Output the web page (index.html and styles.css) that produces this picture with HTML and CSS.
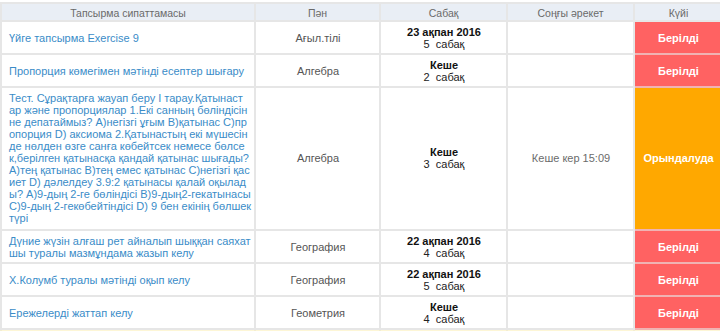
FILE: index.html
```html
<!DOCTYPE html>
<html>
<head>
<meta charset="utf-8">
<link rel="stylesheet" href="styles.css">
</head>
<body>
<div class="wrap">
<table class="tasks">
  <colgroup>
    <col class="c1"><col class="c2"><col class="c3"><col class="c4"><col class="c5">
  </colgroup>
  <thead>
    <tr>
      <th>Тапсырма сипаттамасы</th>
      <th>Пән</th>
      <th>Сабақ</th>
      <th>Соңғы әрекет</th>
      <th>Күйі</th>
    </tr>
  </thead>
  <tbody>
    <tr class="r1">
      <td class="desc"><a>Үйге тапсырма Exercise 9</a></td>
      <td class="subj">Ағыл.тілі</td>
      <td class="lesson"><b>23 ақпан 2016</b><br>5&nbsp; сабақ</td>
      <td class="last"></td>
      <td class="status given">Берілді</td>
    </tr>
    <tr class="r1">
      <td class="desc"><a>Пропорция көмегімен мәтінді есептер шығару</a></td>
      <td class="subj">Алгебра</td>
      <td class="lesson"><b>Кеше</b><br>2&nbsp; сабақ</td>
      <td class="last"></td>
      <td class="status given">Берілді</td>
    </tr>
    <tr class="r3">
      <td class="desc"><a>Тест. Сұрақтарға жауап беру І тарау.Қатынаст<br>ар және пропорциялар 1.Екі санның бөліндісін<br>не депатаймыз? А)негізгі ұғым В)қатынас С)пр<br>опорция D) аксиома 2.Қатынастың екі мүшесін<br>де нөлден өзге санға көбейтсек немесе бөлсе<br>к,берілген қатынасқа қандай қатынас шығады?<br>А)тең қатынас В)тең емес қатынас С)негізгі қас<br>иет D) дәлелдеу 3.9:2 қатынасы қалай оқылад<br>ы? А)9-дың 2-ге бөліндісі В)9-дың2-гекатынасы<br>С)9-дың 2-гекөбейтіндісі D) 9 бен екінің бөлшек<br>түрі</a></td>
      <td class="subj">Алгебра</td>
      <td class="lesson"><b>Кеше</b><br>3&nbsp; сабақ</td>
      <td class="last">Кеше кер 15:09</td>
      <td class="status progress">Орындалуда</td>
    </tr>
    <tr class="r1">
      <td class="desc"><a>Дүние жүзін алғаш рет айналып шыққан саяхат<br>шы туралы мазмұндама жазып келу</a></td>
      <td class="subj">География</td>
      <td class="lesson"><b>22 ақпан 2016</b><br>4&nbsp; сабақ</td>
      <td class="last"></td>
      <td class="status given">Берілді</td>
    </tr>
    <tr class="r1">
      <td class="desc"><a>Х.Колумб туралы мәтінді оқып келу</a></td>
      <td class="subj">География</td>
      <td class="lesson"><b>22 ақпан 2016</b><br>5&nbsp; сабақ</td>
      <td class="last"></td>
      <td class="status given">Берілді</td>
    </tr>
    <tr class="r1">
      <td class="desc"><a>Ережелерді жаттап келу</a></td>
      <td class="subj">Геометрия</td>
      <td class="lesson"><b>Кеше</b><br>4&nbsp; сабақ</td>
      <td class="last"></td>
      <td class="status given">Берілді</td>
    </tr>
    <tr class="next">
      <td></td><td></td><td></td><td></td><td></td>
    </tr>
  </tbody>
</table>
</div>
</body>
</html>
```
FILE: styles.css
```css
html, body {
  margin: 0;
  padding: 0;
  background: #ffffff;
  overflow: hidden;
}
.wrap {
  padding: 2px 0 0 0;
  width: 722px;
}
.tasks {
  border-collapse: collapse;
  table-layout: fixed;
  width: 722px;
  font-family: "Liberation Sans", Arial, sans-serif;
  font-size: 11px;
  color: #333;
}
.c1 { width: 254px; }
.c2 { width: 125px; }
.c3 { width: 127px; }
.c4 { width: 127px; }
.c5 { width: 89px; }
.tasks th, .tasks td {
  border: 2px solid #e6e6e6;
}
.tasks th {
  background: #e9eef5;
  color: #6a6a6a;
  font-weight: normal;
  font-size: 10.5px;
  height: 15px;
  padding: 1px 4px 0 4px;
  text-align: center;
  line-height: 14px;
}
.tasks td {
  padding: 3px 6px 3px 7px;
  line-height: 12px;
  vertical-align: middle;
}
.r1 td { height: 25px; }
.r3 td {
  padding-top: 4px;
  padding-bottom: 5px;
}
.tasks td.desc {
  padding-right: 1px;
}
.desc a {
  color: #3a8cc8;
  text-decoration: none;
  word-break: break-all;
}
.subj {
  text-align: center;
  color: #555;
}
.lesson {
  text-align: center;
  color: #222;
}
.lesson b { color: #111; }
.last {
  text-align: center;
  color: #6b6b6b;
}
.tasks td.status {
  text-align: center;
  padding-left: 2px;
  padding-right: 2px;
  color: #fff;
  font-weight: bold;
  font-size: 11px;
  border-color: #f0b3b3;
}
.status.given {
  background: #ff6262;
}
.status.progress {
  background: #ffa800;
  border-color: #f5c9a0;
}
.next td {
  height: 4px;
  padding: 0;
  background: #fdf6d6;
  border-color: #f3edd0;
}
```
